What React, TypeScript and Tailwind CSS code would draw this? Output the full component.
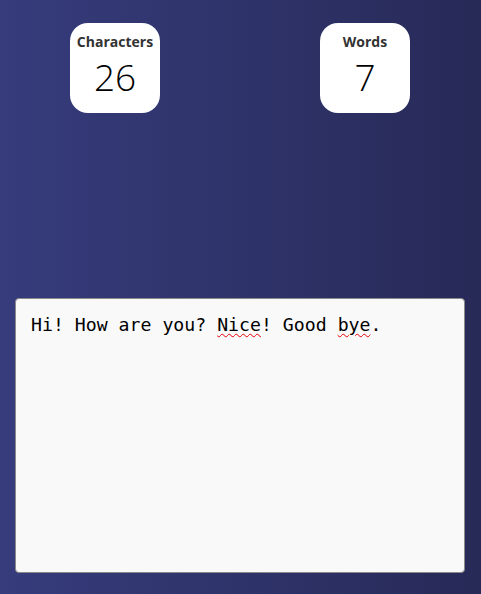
import React from "react";

export default function App() {
  const text = "Hi! How are you? Nice! Good bye.";
  const chars = text.length - 6;
  return (
    <div className="w-[481px] h-[594px] overflow-hidden bg-[linear-gradient(to_right,#363c7c,#272a57)] flex flex-col">
      <div className="flex pt-[23px] pl-[70px] gap-[160px]">
        <div className="w-[90px] h-[90px] bg-white rounded-[18px] flex flex-col items-center pt-[10px]">
          <div className="text-[14px] font-bold text-[#333] leading-[18px] font-['Open_Sans',sans-serif]">Characters</div>
          <div className="text-[37px] leading-[44px] font-light text-black mt-[4px] font-['Open_Sans',sans-serif]">{chars}</div>
        </div>
        <div className="w-[90px] h-[90px] bg-white rounded-[18px] flex flex-col items-center pt-[10px]">
          <div className="text-[14px] font-bold text-[#333] leading-[18px] font-['Open_Sans',sans-serif]">Words</div>
          <div className="text-[37px] leading-[44px] font-light text-black mt-[4px] font-['Open_Sans',sans-serif]">7</div>
        </div>
      </div>
      <div className="mt-[185px] ml-[15px] w-[450px] h-[275px] bg-[#f9f9f9] border border-[#8a8a8a] rounded-[4px] px-[15px] pt-[14px]">
        <div className="font-['DejaVu_Sans_Mono',monospace] text-[18.2px] leading-[24px] text-black whitespace-pre">
          Hi! How are you? <span className="underline decoration-wavy decoration-red-600 decoration-1 underline-offset-2">Nice</span>! Good <span className="underline decoration-wavy decoration-red-600 decoration-1 underline-offset-2">bye</span>.
        </div>
      </div>
    </div>
  );
}
